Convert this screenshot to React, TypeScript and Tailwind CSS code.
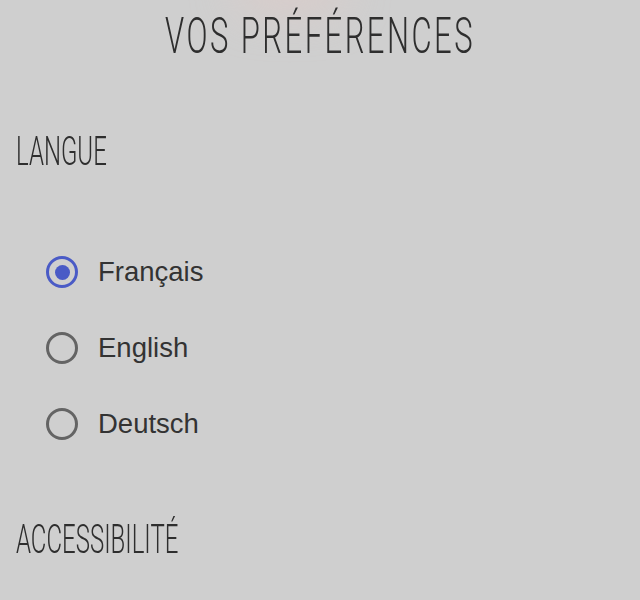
import { useState } from "react";

const langs = ["Français", "English", "Deutsch"];

function Radio({ checked }: { checked: boolean }) {
  return checked ? (
    <span className="flex h-[32px] w-[32px] items-center justify-center rounded-full border-[3px] border-[#4a5bc6]">
      <span className="h-[15px] w-[15px] rounded-full bg-[#4a5bc6]" />
    </span>
  ) : (
    <span className="h-[32px] w-[32px] rounded-full border-[3px] border-[#646464]" />
  );
}

export default function App() {
  const [lang, setLang] = useState("Français");

  return (
    <main className="relative h-[600px] w-full overflow-hidden bg-[#cfcfcf] font-['Roboto',sans-serif] text-[#333]">
      {/* faint glow at the top */}
      <div className="absolute left-[235px] top-[-30px] h-[40px] w-[110px] rounded-full bg-[#e8c9c3] opacity-50 blur-xl" />

      <h1 className="relative flex h-[72px] items-center justify-center">
        <span className="inline-block origin-center scale-x-[0.62] text-[50px] font-light uppercase leading-none tracking-[4px] text-[#2e2e2e]">
          Vos préférences
        </span>
      </h1>

      <section className="mt-[60px] px-4">
        <h2 className="inline-block origin-left scale-x-[0.6] text-[40px] font-light uppercase leading-none text-[#2e2e2e]">
          Langue
        </h2>

        <div className="mt-[84px] flex flex-col gap-[44px] pl-[30px]">
          {langs.map((l) => (
            <button
              key={l}
              type="button"
              onClick={() => setLang(l)}
              className="flex h-[32px] items-center gap-[20px] text-left"
            >
              <Radio checked={lang === l} />
              <span className="font-['Liberation_Sans',sans-serif] text-[27.5px] text-[#333]">
                {l}
              </span>
            </button>
          ))}
        </div>

        <h2 className="mt-[80px] inline-block origin-left scale-x-[0.6] text-[40px] font-light uppercase leading-none text-[#2e2e2e]">
          Accessibilité
        </h2>
      </section>
    </main>
  );
}
